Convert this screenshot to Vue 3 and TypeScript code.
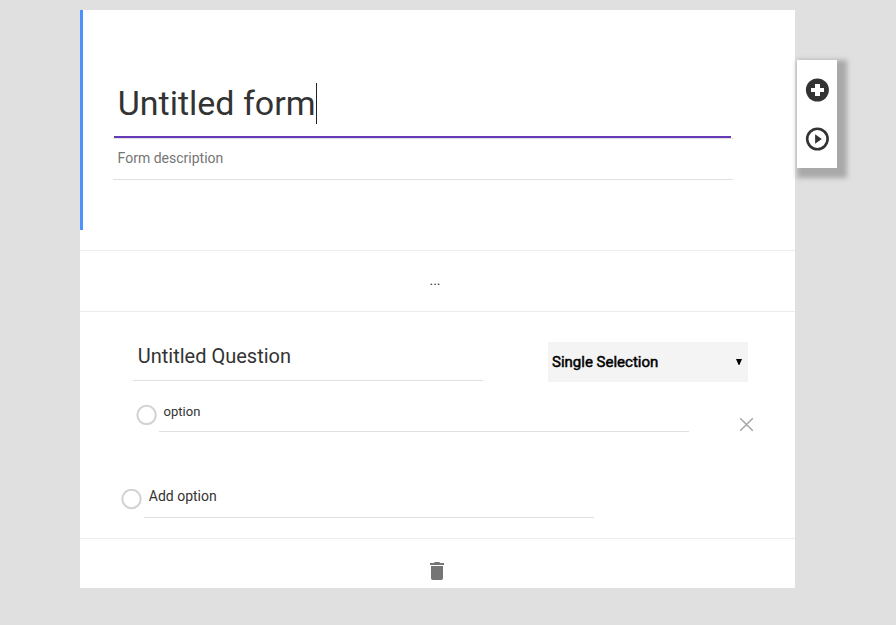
<script setup lang="ts">
import { ref } from 'vue'

const title = ref<string>('Untitled form')
const description = ref<string>('Form description')
const question = ref<string>('Untitled Question')
const options = ref<string[]>(['option'])
</script>

<template>
  <div class="page">
    <main class="card">
      <header class="form-head">
        <h1 class="title">{{ title }}<span class="caret"></span></h1>
        <p class="description">{{ description }}</p>
      </header>

      <div class="more">...</div>

      <section class="question">
        <div class="question-row">
          <h2 class="question-title">{{ question }}</h2>
          <div class="select">
            <span class="select-label">Single Selection</span>
            <svg class="arrow" width="6" height="6" viewBox="0 0 6 6"><path d="M0 0H6L3.4 6H2.6Z" /></svg>
          </div>
        </div>

        <div v-for="(option, i) in options" :key="i" class="option-row">
          <svg class="radio" width="21" height="21" viewBox="0 0 21 21"><circle cx="10.6" cy="10.9" r="9.2" /></svg>
          <span class="option-input">{{ option }}</span>
          <svg class="remove" width="15" height="15" viewBox="0 0 15 15"><path d="M1.2 1.2L13.8 13.8M13.8 1.2L1.2 13.8" /></svg>
        </div>

        <div class="add-row">
          <svg class="radio" width="21" height="21" viewBox="0 0 21 21"><circle cx="10.5" cy="10" r="9.2" /></svg>
          <span class="add-input">Add option</span>
        </div>
      </section>

      <footer class="foot">
        <svg class="trash" width="14" height="18" viewBox="0 0 14 18">
          <path d="M0 1H3.8L4.8 0H9.2L10.2 1H14V3H0ZM1 4H13V16.2Q13 18 11.2 18H2.8Q1 18 1 16.2Z" />
        </svg>
      </footer>
    </main>

    <aside class="tools">
      <svg class="tool" width="24" height="24" viewBox="0 0 24 24">
        <circle cx="12.4" cy="12" r="11.5" />
        <path class="plus" d="M10 6H15V10H19V14H15V18H10V14H6V10H10Z" />
      </svg>
      <svg class="tool" width="24" height="24" viewBox="0 0 24 24">
        <circle class="ring" cx="12.4" cy="12" r="10.2" />
        <path d="M10.1 7.2L16.8 12L10.1 16.8Z" />
      </svg>
    </aside>
  </div>
</template>

<style>
body {
  margin: 0;
  background: #e0e0e0;
}
</style>

<style scoped>
.page {
  box-sizing: border-box;
  display: flex;
  align-items: flex-start;
  height: 625px;
  padding: 10px 0 0 80px;
  background: #e0e0e0;
  color: #333;
  font-family: Roboto, "Liberation Sans", sans-serif;
}
.card {
  flex: none;
  width: 715px;
  height: 578px;
  background: #fff;
}
.form-head {
  box-sizing: border-box;
  height: 220px;
  padding: 72px 62px 0 30px;
  border-left: 3px solid #4d90fe;
}
.title {
  display: flex;
  align-items: center;
  box-sizing: border-box;
  height: 57px;
  margin: 0;
  padding: 0 0 14px 4.7px;
  border-bottom: 1px solid #e0e0e0;
  background: linear-gradient(#673ab7, #673ab7) 1px 100% / 617px 2px no-repeat;
  background-origin: padding-box;
  font-size: 34px;
  font-weight: 400;
  line-height: 42px;
}
.caret {
  width: 1px;
  height: 41px;
  margin-left: 0.4px;
  background: #222;
}
.description {
  box-sizing: border-box;
  height: 41px;
  margin: 0;
  padding: 9px 0 0 4.6px;
  border-bottom: 1px solid #e0e0e0;
  color: #757575;
  font-size: 14px;
  line-height: 20px;
}
.more {
  box-sizing: border-box;
  height: 62px;
  margin-top: 20px;
  padding: 20px 5px 0 0;
  border-top: 1px solid #ececec;
  border-bottom: 1px solid #ececec;
  font-size: 14px;
  line-height: 18px;
  text-align: center;
}
.question {
  box-sizing: border-box;
  height: 226px;
  padding-top: 30px;
}
.question-row {
  display: flex;
  padding-left: 53px;
}
.question-title {
  box-sizing: border-box;
  width: 350px;
  height: 39px;
  margin: 0 65px 0 0;
  padding-left: 4.8px;
  border-bottom: 1px solid #e0e0e0;
  font-size: 20px;
  font-weight: 400;
  line-height: 28px;
}
.select {
  display: flex;
  align-items: center;
  justify-content: space-between;
  box-sizing: border-box;
  width: 200px;
  height: 40px;
  padding: 0 6px 0 4px;
  background: #f4f4f4;
  color: #000;
  font-size: 15px;
}
.select-label {
  -webkit-text-stroke: 0.5px #000;
}
.option-row {
  display: flex;
  align-items: flex-start;
  height: 50px;
  padding-left: 56px;
}
.radio {
  flex: none;
  margin: 22px 2px 0 0;
  fill: none;
  stroke: #d3d3d3;
  stroke-width: 2.1;
}
.option-input {
  box-sizing: border-box;
  width: 530px;
  height: 50px;
  padding: 21px 0 0 4.6px;
  border-bottom: 1px solid #e0e0e0;
  font-size: 13px;
  line-height: 18px;
}
.remove {
  margin: 34.5px 0 0 50px;
  fill: none;
  stroke: #a9a4a4;
  stroke-width: 1.5;
}
.add-row {
  display: flex;
  align-items: flex-start;
  margin-top: 35px;
  padding-left: 41px;
}
.add-input {
  box-sizing: border-box;
  width: 450px;
  height: 51px;
  padding: 20px 0 0 4.8px;
  border-bottom: 1px solid #e0e0e0;
  font-size: 14px;
  line-height: 18px;
}
.foot {
  display: flex;
  justify-content: center;
  box-sizing: border-box;
  height: 50px;
  padding: 23px 1px 0 0;
  border-top: 1px solid #ececec;
}
.trash {
  fill: #757575;
}
.tools {
  display: flex;
  flex-direction: column;
  align-items: center;
  gap: 25px;
  box-sizing: border-box;
  width: 40px;
  height: 108px;
  margin: 50px 0 0 2px;
  padding-top: 18px;
  background: #fff;
  box-shadow: 5px 5px 5px 5px #a9a9a9;
}
.tool {
  flex: none;
  fill: #333;
}
.plus {
  fill: #fff;
}
.ring {
  fill: none;
  stroke: #333;
  stroke-width: 2.6;
}
</style>
